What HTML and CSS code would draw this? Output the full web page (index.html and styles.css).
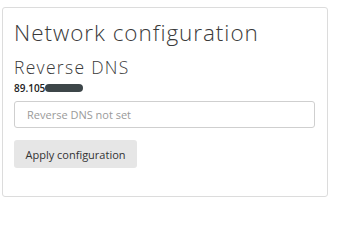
FILE: index.html
```html
<!DOCTYPE html>
<html>
<head>
<meta charset="utf-8">
<link rel="stylesheet" href="styles.css">
</head>
<body>
<div class="card">
  <h1 class="title">Network configuration</h1>
  <h2 class="subtitle">Reverse DNS</h2>
  <div class="ip"><span>89.105</span><span class="redact"></span></div>
  <input class="field" type="text" placeholder="Reverse DNS not set">
  <button class="btn" type="button">Apply configuration</button>
</div>
</body>
</html>
```
FILE: styles.css
```css
html, body {
  margin: 0;
  padding: 0;
  background: #fff;
}
body {
  padding: 7px 0 0 2px;
  font-family: "Open Sans", "Liberation Sans", sans-serif;
  color: #333;
}
.card {
  box-sizing: border-box;
  width: 326px;
  height: 190px;
  border: 1px solid #dcdcdc;
  border-radius: 3px;
  padding: 12px 11px 0 11px;
  display: flex;
  flex-direction: column;
  align-items: flex-start;
}
.title {
  margin: 0;
  font-family: "Open Sans", sans-serif;
  font-weight: 300;
  font-size: 22.5px;
  line-height: 26px;
  color: #3a3a3a;
  letter-spacing: 0.95px;
}
.subtitle {
  margin: 11px 0 0 0;
  font-family: "Open Sans", sans-serif;
  font-weight: 300;
  font-size: 17.5px;
  line-height: 20px;
  color: #3a3a3a;
  letter-spacing: 1.3px;
}
.ip {
  margin-top: 4px;
  display: flex;
  align-items: center;
  font-size: 10px;
  font-weight: 600;
  line-height: 14px;
  color: #222;
}
.redact {
  display: inline-block;
  width: 38px;
  height: 8px;
  border-radius: 4px;
  background: #3d4649;
  filter: blur(0.7px);
}
.field {
  box-sizing: border-box;
  margin-top: 6px;
  width: 301px;
  height: 27px;
  border: 1px solid #cfcfcf;
  border-radius: 3px;
  padding: 0 12px;
  font-family: "Open Sans", sans-serif;
  font-size: 11px;
  color: #555;
  outline: none;
}
.field::placeholder {
  color: #9a9a9a;
}
.btn {
  box-sizing: border-box;
  margin-top: 12px;
  height: 28px;
  width: 123px;
  border: none;
  border-radius: 3px;
  background: #e6e6e6;
  font-family: "Open Sans", sans-serif;
  font-size: 11px;
  color: #333;
  padding: 0;
}
```
